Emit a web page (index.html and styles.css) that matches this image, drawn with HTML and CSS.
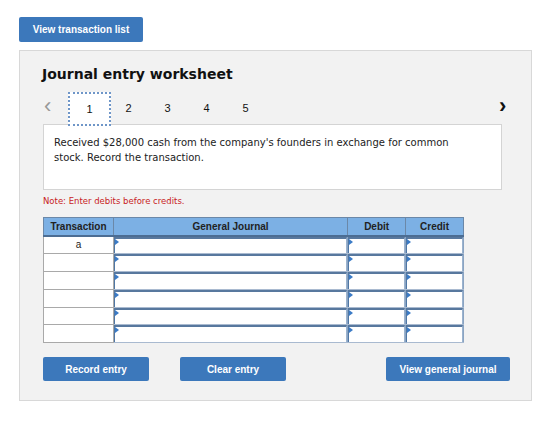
FILE: index.html
```html
<!DOCTYPE html>
<html lang="en">
<head>
    <meta charset="UTF-8">
    <meta name="viewport" content="width=device-width, initial-scale=1.0">
    <title>Journal entry worksheet</title>
    <link rel="stylesheet" href="styles.css">
</head>
<body>
	<div class="page">
		<button type="button" class="btn btn-list">View transaction list</button>

		<div class="panel">
			<h2 class="title">Journal entry worksheet</h2>

			<div class="tabs">
				<span class="arrow prev">&lsaquo;</span>
				<span class="tab active">1</span>
				<span class="tab">2</span>
				<span class="tab">3</span>
				<span class="tab">4</span>
				<span class="tab">5</span>
				<span class="arrow next">&rsaquo;</span>
			</div>

			<div class="question">
				Received $28,000 cash from the company's founders in exchange for common stock. Record the transaction.
			</div>

			<p class="note">Note: Enter debits before credits.</p>

			<table class="journal">
				<thead>
					<tr>
						<th class="c-tx">Transaction</th>
						<th class="c-gj">General Journal</th>
						<th class="c-amt">Debit</th>
						<th class="c-amt">Credit</th>
					</tr>
				</thead>
				<tbody>
					<tr><td class="tx">a</td><td class="in"><div class="field"></div></td><td class="in"><div class="field"></div></td><td class="in"><div class="field"></div></td></tr>
					<tr><td class="tx"></td><td class="in"><div class="field"></div></td><td class="in"><div class="field"></div></td><td class="in"><div class="field"></div></td></tr>
					<tr><td class="tx"></td><td class="in"><div class="field"></div></td><td class="in"><div class="field"></div></td><td class="in"><div class="field"></div></td></tr>
					<tr><td class="tx"></td><td class="in"><div class="field"></div></td><td class="in"><div class="field"></div></td><td class="in"><div class="field"></div></td></tr>
					<tr><td class="tx"></td><td class="in"><div class="field"></div></td><td class="in"><div class="field"></div></td><td class="in"><div class="field"></div></td></tr>
					<tr><td class="tx"></td><td class="in"><div class="field"></div></td><td class="in"><div class="field"></div></td><td class="in"><div class="field"></div></td></tr>
				</tbody>
			</table>

			<div class="actions">
				<button type="button" class="btn btn-record">Record entry</button>
				<button type="button" class="btn btn-clear">Clear entry</button>
				<button type="button" class="btn btn-view">View general journal</button>
			</div>
		</div>
	</div>
</body>
</html>
```

FILE: styles.css
```css
* {
	box-sizing: border-box;
}
body {
	margin: 0;
	background: #ffffff;
	font-family: "DejaVu Sans", Verdana, sans-serif;
	color: #222;
}
.page {
	padding: 17px 0 0 19px;
	width: 532px;
}
.btn {
	display: block;
	height: 25px;
	border: none;
	border-radius: 2px;
	background-color: #3c78bb;
	color: #fff;
	font-family: "Liberation Sans", Arial, sans-serif;
	font-size: 10px;
	font-weight: bold;
	cursor: pointer;
}
.btn-list {
	width: 124px;
	margin-bottom: 8px;
}
.panel {
	width: 513px;
	height: 351px;
	background-color: #f2f2f2;
	border: 1px solid #d8d8d8;
	padding: 0 0 0 22px;
}
.title {
	margin: 14px 0 0 0;
	font-size: 14px;
	font-weight: bold;
	color: #111;
	line-height: 18px;
}
.tabs {
	display: flex;
	align-items: center;
	height: 32px;
	margin-top: 9px;
	font-family: "Liberation Sans", Arial, sans-serif;
	font-size: 11px;
	color: #111;
}
.arrow {
	font-size: 22px;
	line-height: 20px;
	width: 26px;
	padding-left: 2px;
	margin-top: -4px;
}
.prev {
	color: #999;
}
.next {
	margin-left: auto;
	width: 34px;
	color: #111;
	font-weight: bold;
}
.tab {
	width: 39px;
	text-align: center;
	line-height: 32px;
}
.tab.active {
	width: 43px;
	height: 34px;
	line-height: 30px;
	background: #fff;
	border: 2px dotted #6f96c8;
	margin-top: 2px;
	margin-right: -2px;
	position: relative;
	z-index: 1;
}
.question {
	width: 459px;
	height: 66px;
	margin-left: 1px;
	background: #fff;
	border: 1px solid #d4d4d4;
	padding: 10px 40px 10px 10px;
	font-size: 10px;
	line-height: 15px;
	color: #222;
}
.note {
	margin: 5px 0 0 1px;
	font-size: 8.5px;
	line-height: 12px;
	color: #c81d25;
}
.journal {
	margin: 10px 0 0 1px;
	border-collapse: collapse;
	width: 421px;
	font-family: "Liberation Sans", Arial, sans-serif;
	font-size: 10px;
}
.journal th {
	height: 18px;
	background-color: #7cb0e4;
	border: 1px solid #6b88a8;
	border-bottom: 2px solid #4c6d93;
	font-weight: bold;
	color: #222;
	padding: 0;
}
.c-tx {
	width: 70px;
}
.c-gj {
	width: 235px;
}
.c-amt {
	width: 58px;
}
.journal td {
	height: 17.8px;
	padding: 0;
	background: #fff;
}
.tx {
	border: 1px solid #a9a9a9;
	text-align: center;
	color: #222;
}
.in {
	border-left: 1px solid #5f7fa6;
	border-right: 1px solid #8ba4c2;
	border-bottom: 1px solid #a9bad0;
}
.field {
	position: relative;
	height: 16.8px;
	border-top: 2px solid #58789e;
	border-left: 1px solid #4f77a5;
	border-right: 1px solid #9bb3cf;
	background: #fff;
}
.field::before {
	content: "";
	position: absolute;
	left: 0;
	top: 0;
	border-left: 4px solid #3b7bc6;
	border-top: 3px solid transparent;
	border-bottom: 3px solid transparent;
}
.actions {
	display: flex;
	margin-top: 14px;
	margin-left: 1px;
	width: 467px;
}
.btn-record,
.btn-clear {
	width: 106px;
	height: 24px;
}
.btn-clear {
	margin-left: 31px;
}
.btn-view {
	width: 124px;
	height: 24px;
	margin-left: auto;
}
```
